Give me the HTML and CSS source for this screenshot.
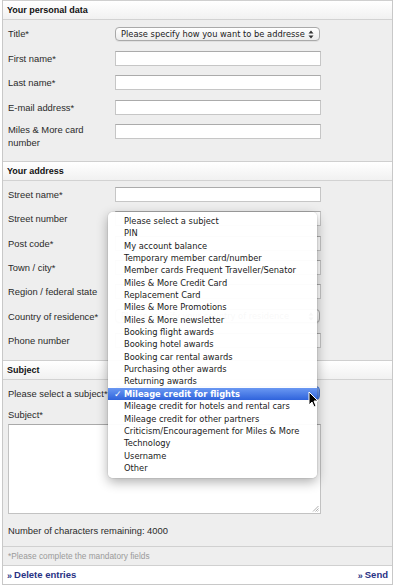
FILE: index.html
```html
<!DOCTYPE html>
<html lang="en">
<head>
<meta charset="utf-8">
<title>Contact form</title>
<link rel="stylesheet" href="styles.css">
</head>
<body>
<div class="form">
  <section class="box">
    <h2 class="box-head">Your personal data</h2>
    <div class="box-body body-personal">
      <div class="row"><span class="lbl">Title*</span><div class="select"><span class="sel-text">Please specify how you want to be addresse</span><svg class="arrows" width="6" height="9" viewBox="0 0 6 9"><path d="M3 0.5 L5.5 3.5 H0.5Z M3 8.5 L5.5 5.5 H0.5Z" fill="#333"/></svg></div></div>
      <div class="row"><span class="lbl">First name*</span><span class="input"></span></div>
      <div class="row"><span class="lbl">Last name*</span><span class="input"></span></div>
      <div class="row"><span class="lbl">E-mail address*</span><span class="input"></span></div>
      <div class="row"><span class="lbl lbl-wrap">Miles &amp; More card number</span><span class="input"></span></div>
    </div>
  </section>
  <section class="box">
    <h2 class="box-head">Your address</h2>
    <div class="box-body body-address">
      <div class="row"><span class="lbl">Street name*</span><span class="input"></span></div>
      <div class="row"><span class="lbl">Street number</span><span class="input"></span></div>
      <div class="row"><span class="lbl">Post code*</span><span class="input"></span></div>
      <div class="row"><span class="lbl">Town / city*</span><span class="input"></span></div>
      <div class="row"><span class="lbl">Region / federal state</span><span class="input"></span></div>
      <div class="row"><span class="lbl">Country of residence*</span><div class="select"><span class="sel-text sel-faint">Please specify your country of residence</span><svg class="arrows" width="6" height="9" viewBox="0 0 6 9"><path d="M3 0.5 L5.5 3.5 H0.5Z M3 8.5 L5.5 5.5 H0.5Z" fill="#333"/></svg></div></div>
      <div class="row"><span class="lbl">Phone number</span><span class="input"></span></div>
    </div>
  </section>
  <section class="box">
    <h2 class="box-head">Subject</h2>
    <div class="box-body body-subject">
      <div class="row"><span class="lbl">Please select a subject*</span><div class="select select-focus"></div></div>
      <div class="lbl-block">Subject*</div>
      <div class="textarea"><svg class="grip" width="7" height="7" viewBox="0 0 7 7"><path d="M6.5 1 L1 6.5 M6.5 3.5 L3.5 6.5 M6.5 5.5 L5.5 6.5" stroke="#999" stroke-width="0.8"/></svg></div>
      <div class="counter">Number of characters remaining: 4000</div>
    </div>
  </section>
  <div class="note">*Please complete the mandatory fields</div>
  <div class="actions">
    <a class="link" href="#"><span class="raquo">»</span>Delete entries</a>
    <a class="link" href="#"><span class="raquo">»</span>Send</a>
  </div>

  <ul class="popup">
    <li>Please select a subject</li>
    <li>PIN</li>
    <li>My account balance</li>
    <li>Temporary member card/number</li>
    <li>Member cards Frequent Traveller/Senator</li>
    <li>Miles &amp; More Credit Card</li>
    <li>Replacement Card</li>
    <li>Miles &amp; More Promotions</li>
    <li>Miles &amp; More newsletter</li>
    <li>Booking flight awards</li>
    <li>Booking hotel awards</li>
    <li>Booking car rental awards</li>
    <li>Purchasing other awards</li>
    <li>Returning awards</li>
    <li class="selected"><span class="check">✓</span>Mileage credit for flights</li>
    <li>Mileage credit for hotels and rental cars</li>
    <li>Mileage credit for other partners</li>
    <li>Criticism/Encouragement for Miles &amp; More</li>
    <li>Technology</li>
    <li>Username</li>
    <li>Other</li>
  </ul>
  <svg class="cursor" width="11" height="17" viewBox="0 0 11 17"><path d="M1 1 L1 14 L4 11 L6 16 L8 15 L6 10 L10 10 Z" fill="#000" stroke="#fff" stroke-width="1"/></svg>
</div>
</body>
</html>
```

FILE: styles.css
```css
* { box-sizing: border-box; }

html, body {
  margin: 0;
  padding: 0;
  background: #ffffff;
}

body {
  font-family: "Liberation Sans", Arial, sans-serif;
  color: #2a2a2a;
}

.form {
  position: relative;
  margin-left: 2px;
  width: 391px;
  border-left: 1px solid #c8c8c8;
  border-right: 1px solid #c8c8c8;
  border-bottom: 1px solid #c8c8c8;
}

.box {
  border-top: 1px solid #cfcfcf;
  background: #eeeeee;
}

.box-head {
  margin: 0;
  height: 19px;
  padding: 0 4px;
  font-size: 9px;
  line-height: 18px;
  font-weight: bold;
  color: #111;
  background: linear-gradient(#ffffff, #f1f1f1);
  border-bottom: 1px solid #d2d2d2;
}

.box-body {
  padding: 6px 5px 9px;
  display: flex;
  flex-direction: column;
  gap: 9.5px;
}

.body-personal {
  padding-bottom: 12px;
}

.body-address {
  padding-top: 6px;
  padding-bottom: 12px;
  gap: 9.33px;
}

.row {
  display: flex;
  align-items: center;
  min-height: 15px;
}

.lbl {
  width: 107px;
  flex: none;
  font-size: 9.4px;
  line-height: 13px;
  color: #2a2a2a;
}

.lbl-wrap {
  width: 90px;
  margin-right: 17px;
  align-self: flex-start;
  margin-top: -1px;
}

.input {
  display: block;
  width: 206px;
  height: 15px;
  background: #fff;
  border: 1px solid #c6c6c6;
  border-top-color: #ababab;
}

.row .lbl-wrap + .input {
  align-self: flex-start;
}

.select {
  position: relative;
  width: 205px;
  height: 14px;
  border: 1px solid #a9a9a9;
  border-radius: 4px;
  background: linear-gradient(#ffffff, #ececec);
  box-shadow: 0 1px 0 rgba(0,0,0,0.06);
  font-family: "DejaVu Sans", sans-serif;
  font-size: 8.3px;
  line-height: 12px;
  color: #222;
  padding-left: 5px;
  overflow: hidden;
  white-space: nowrap;
}

.sel-text {
  display: block;
  width: 186px;
  overflow: hidden;
}

.sel-faint {
  color: #555;
}

.arrows {
  position: absolute;
  right: 5px;
  top: 2px;
}

.select-focus {
  background: linear-gradient(#8fb4f5, #3f74e0);
  border-color: #4a78d6;
}

.body-subject {
  gap: 0;
}

.lbl-block {
  margin-top: 8px;
  font-size: 9.4px;
  line-height: 12px;
}

.textarea {
  position: relative;
  margin-top: 3px;
  width: 313px;
  height: 90px;
  background: #fff;
  border: 1px solid #c2c2c2;
  border-top-color: #a9a9a9;
}

.grip {
  position: absolute;
  right: 1px;
  bottom: 1px;
}

.counter {
  margin-top: 11px;
  font-size: 9.4px;
  line-height: 12px;
}

.note {
  border-top: 1px solid #d0d0d0;
  background: #eeeeee;
  height: 19px;
  padding: 0 5px;
  font-size: 8.3px;
  line-height: 19px;
  color: #9a9a9a;
}

.actions {
  border-top: 1px solid #d0d0d0;
  background: #fff;
  height: 19px;
  padding: 0 4px 0 4px;
  display: flex;
  justify-content: space-between;
  align-items: center;
}

.link {
  color: #283284;
  font-weight: bold;
  font-size: 9.5px;
  text-decoration: none;
  display: flex;
  align-items: baseline;
}

.raquo {
  font-size: 9px;
  margin-right: 2px;
  position: relative;
  top: 1px;
}

.popup {
  position: absolute;
  left: 105px;
  top: 212px;
  width: 209px;
  margin: 0;
  padding: 3px 0 4px;
  list-style: none;
  background: rgba(255,255,255,0.96);
  border-radius: 5px;
  box-shadow: 0 4px 12px rgba(0,0,0,0.32), 0 0 0 1px rgba(0,0,0,0.05);
  font-family: "DejaVu Sans", sans-serif;
  font-size: 8.3px;
  color: #1a1a1a;
}

.popup li {
  height: 12.35px;
  line-height: 12.35px;
  padding-left: 16px;
  white-space: nowrap;
  position: relative;
}

.popup li.selected {
  background: linear-gradient(#6a98f2, #2f63dc);
  color: #fff;
  font-weight: bold;
}

.check {
  position: absolute;
  left: 6px;
  top: 0;
  font-weight: bold;
  font-size: 9px;
}

.cursor {
  position: absolute;
  left: 305px;
  top: 391px;
}
```
